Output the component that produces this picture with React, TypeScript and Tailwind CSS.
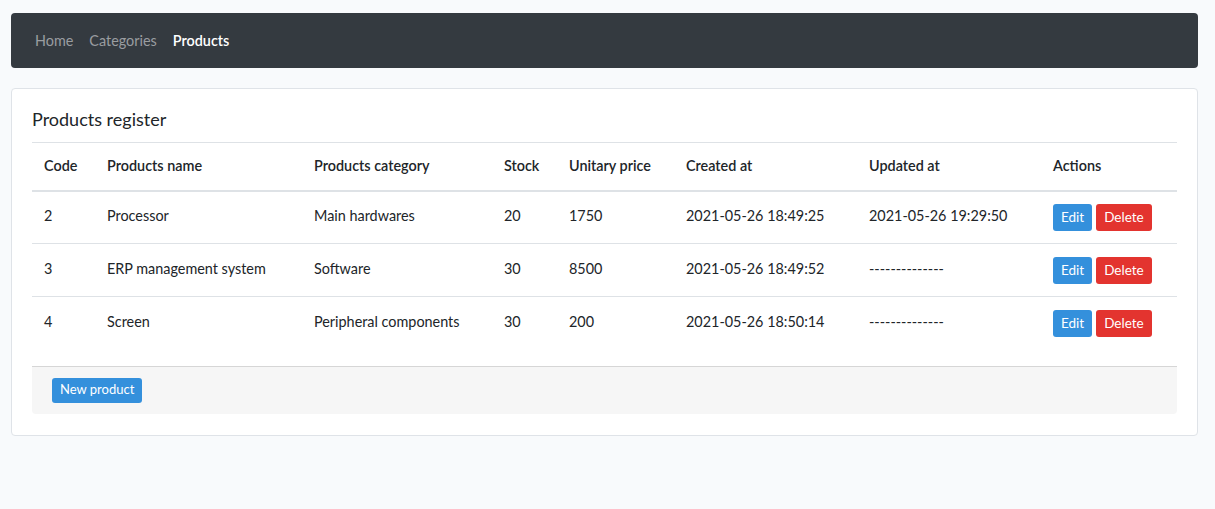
import React from 'react';

type Product = {
  code: number;
  name: string;
  category: string;
  stock: number;
  price: number;
  createdAt: string;
  updatedAt: string;
};

const products: Product[] = [
  { code: 2, name: 'Processor', category: 'Main hardwares', stock: 20, price: 1750, createdAt: '2021-05-26 18:49:25', updatedAt: '2021-05-26 19:29:50' },
  { code: 3, name: 'ERP management system', category: 'Software', stock: 30, price: 8500, createdAt: '2021-05-26 18:49:52', updatedAt: '--------------' },
  { code: 4, name: 'Screen', category: 'Peripheral components', stock: 30, price: 200, createdAt: '2021-05-26 18:50:14', updatedAt: '--------------' },
];

const columns = [
  { label: 'Code', width: 'w-[63px]' },
  { label: 'Products name', width: 'w-[207px]' },
  { label: 'Products category', width: 'w-[190px]' },
  { label: 'Stock', width: 'w-[65px]' },
  { label: 'Unitary price', width: 'w-[117px]' },
  { label: 'Created at', width: 'w-[183px]' },
  { label: 'Updated at', width: 'w-[184px]' },
  { label: 'Actions', width: 'w-[136px]' },
];

export default function App() {
  return (
    <div className="min-h-[509px] bg-[#f8fafc] pl-[11px] pr-[17px] pt-[13px] text-[#212529] font-['Lato',sans-serif] text-[14.4px]">
      <nav className="flex h-[55px] items-center rounded-[4px] bg-[#343a40] px-4 pt-[1px]">
        <div className="flex items-center">
          <a className="px-2 text-[#9a9da0]" href="#">Home</a>
          <a className="px-2 text-[#9a9da0]" href="#">Categories</a>
          <a className="px-2 font-semibold text-white" href="#">Products</a>
        </div>
      </nav>

      <section className="mt-[20px] rounded-[4px] border border-[#dfe3e8] bg-white px-5 pb-[21px] pt-5">
        <h2 className="mb-[13px] text-[18px] leading-[20px]">Products register</h2>
        <table className="w-full table-fixed border-collapse">
          <thead>
            <tr className="border-t border-[#dee2e6]">
              {columns.map((c) => (
                <th key={c.label} className={`${c.width} h-[48px] border-b-2 border-[#dee2e6] px-3 text-left font-semibold`}>
                  {c.label}
                </th>
              ))}
            </tr>
          </thead>
          <tbody>
            {products.map((p, i) => (
              <tr key={p.code} className={i === 0 ? '' : 'border-t border-[#dee2e6]'}>
                <td className="h-[53px] px-3 pb-[2px] align-middle">{p.code}</td>
                <td className="px-3 pb-[2px]">{p.name}</td>
                <td className="px-3 pb-[2px]">{p.category}</td>
                <td className="px-3 pb-[2px]">{p.stock}</td>
                <td className="px-3 pb-[2px]">{p.price}</td>
                <td className="px-3 pb-[2px]">{p.createdAt}</td>
                <td className="px-3 pb-[2px]">{p.updatedAt}</td>
                <td className="px-3">
                  <div className="flex gap-1">
                    <button className="h-[27px] rounded-[3px] bg-[#3490dc] px-2 text-[13.5px] text-white">Edit</button>
                    <button className="h-[27px] rounded-[3px] bg-[#e3342f] px-2 text-[13.5px] text-white">Delete</button>
                  </div>
                </td>
              </tr>
            ))}
          </tbody>
        </table>
        <div className="mt-4 rounded-b-[4px] border-t border-[#d6d6d6] bg-[#f6f6f6] px-5 pb-[11px] pt-[11px]">
          <button className="h-[25px] rounded-[3px] bg-[#3490dc] px-2 text-[13px] text-white">New product</button>
        </div>
      </section>
    </div>
  );
}
